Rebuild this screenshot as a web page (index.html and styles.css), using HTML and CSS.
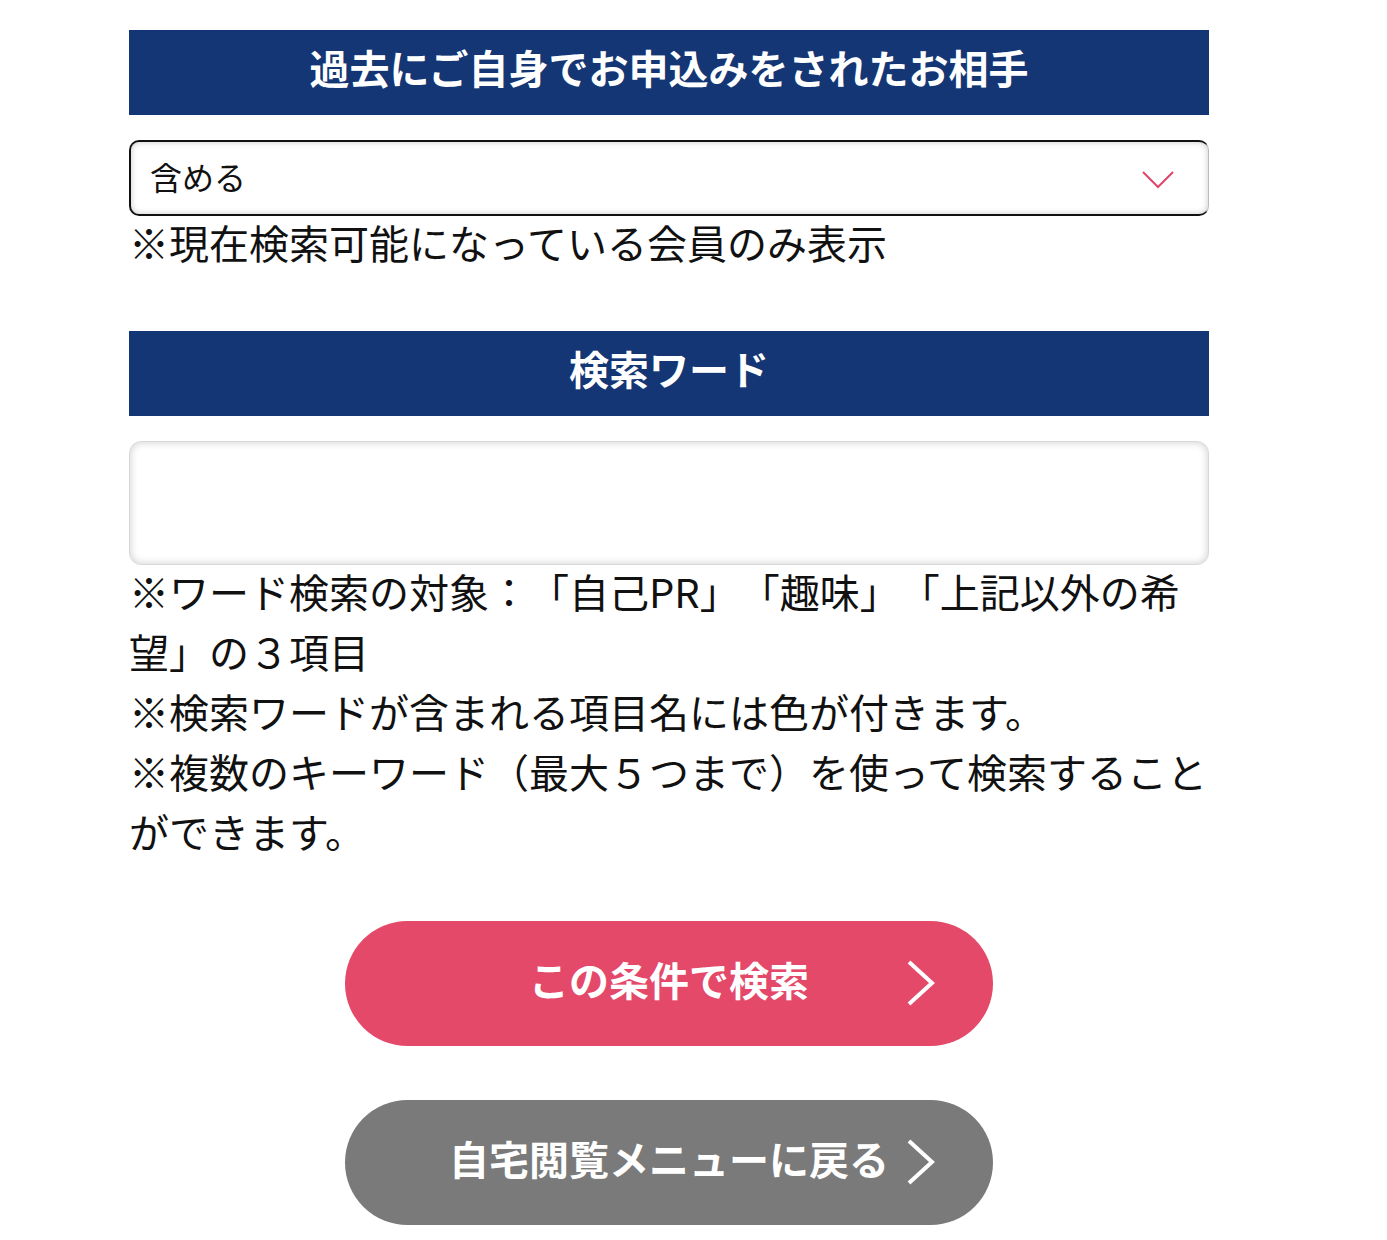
FILE: index.html
```html
<!DOCTYPE html>
<html>
    <head>
        <title>検索条件</title>
        <meta http-equiv="Content-Type" content="text/html; charset=UTF-8">
        <link rel="stylesheet" href="styles.css">
    </head>
    <body>
        <div class="search-form">

            <h2 class="section-title">過去にご自身でお申込みをされたお相手</h2>
            <div class="select-box">
                <span class="select-value">含める</span>
                <svg class="select-arrow" width="32" height="20" viewBox="0 0 32 20">
                    <path d="M1 2 L16 17 L31 2" fill="none" stroke="#e0466a" stroke-width="2"/>
                </svg>
            </div>
            <p class="note">※現在検索可能になっている会員のみ表示</p>

            <h2 class="section-title second">検索ワード</h2>
            <div class="word-input"></div>
            <p class="note">※ワード検索の対象：「自己PR」「趣味」「上記以外の希望」の３項目<br>
                ※検索ワードが含まれる項目名には色が付きます。<br>
                ※複数のキーワード（最大５つまで）を使って検索することができます。</p>

            <div class="buttons">
                <a class="btn btn-search">この条件で検索
                    <svg class="btn-arrow" width="30" height="46" viewBox="0 0 30 46">
                        <path d="M3 2 L26 23 L3 44" fill="none" stroke="#fff" stroke-width="4"/>
                    </svg>
                </a>
                <a class="btn btn-back">自宅閲覧メニューに戻る
                    <svg class="btn-arrow" width="30" height="46" viewBox="0 0 30 46">
                        <path d="M3 2 L26 23 L3 44" fill="none" stroke="#fff" stroke-width="4"/>
                    </svg>
                </a>
            </div>

        </div>
    </body>
</html>
```

FILE: styles.css
```css
body {
    padding: 0;
    margin: 0;
    font-family: "Noto Sans CJK JP", "Noto Sans", sans-serif;
    color: #111;
    background-color: #fff;
    text-spacing-trim: space-all;
}

.search-form {
    width: 1080px;
    margin-left: 129px;
    padding-top: 30px;
}

.section-title {
    margin: 0;
    height: 85px;
    display: flex;
    align-items: center;
    justify-content: center;
    background-color: #143674;
    color: #fff;
    font-size: 40px;
    font-weight: bold;
    padding-bottom: 12px;
    box-sizing: border-box;
}

.section-title.second {
    margin-top: 59px;
}

.select-box {
    margin-top: 25px;
    height: 76px;
    box-sizing: border-box;
    border: 2px solid #111;
    border-right: 1px solid #bbb;
    border-radius: 10px;
    box-shadow: inset 0 0 6px rgba(0, 0, 0, 0.22);
    display: flex;
    align-items: center;
    justify-content: space-between;
    padding: 0 34px 4px 19px;
}

.select-value {
    font-size: 32px;
    line-height: 1;
}

.select-arrow {
    margin-top: 8px;
}

/* pulled up a little: the glyphs sit low in the line box */
.note {
    margin: -4px 0 0;
    font-size: 40px;
    line-height: 60px;
}

.word-input {
    margin-top: 25px;
    height: 124px;
    box-sizing: border-box;
    border: 1px solid #d8d8d8;
    border-radius: 12px;
    box-shadow: inset 0 0 8px rgba(0, 0, 0, 0.2);
}

.buttons {
    display: flex;
    flex-direction: column;
    align-items: center;
    gap: 54px;
    margin-top: 60px;
    padding-bottom: 16px;
}

.btn {
    position: relative;
    width: 648px;
    height: 125px;
    border-radius: 63px;
    display: flex;
    align-items: center;
    justify-content: center;
    color: #fff;
    font-size: 40px;
    font-weight: bold;
    padding-bottom: 10px;
    box-sizing: border-box;
}

.btn-search {
    background-color: #e4496a;
}

.btn-back {
    background-color: #7a7a7a;
}

.btn-arrow {
    position: absolute;
    right: 57px;
    top: 39px;
}
```
